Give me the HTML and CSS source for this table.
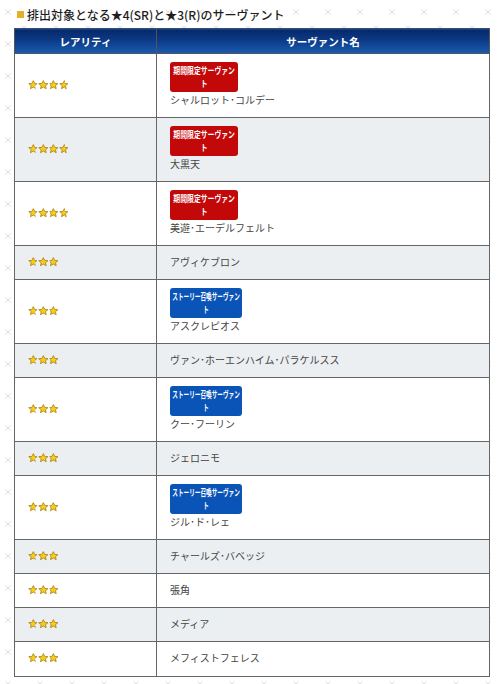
FILE: index.html
```html
<!DOCTYPE html>
<html lang="ja">
<head>
<meta charset="utf-8">
<link rel="stylesheet" href="styles.css">
</head>
<body>
<div class="page">
  <h2 class="title"><span class="mark"></span>排出対象となる★4(SR)と★3(R)のサーヴァント</h2>
  <table class="list">
    <thead>
      <tr><th class="col-r">レアリティ</th><th>サーヴァント名</th></tr>
    </thead>
    <tbody>
      <tr><td><span class="stars s4"></span></td><td><span class="badge red"><span class="btxt">期間限定サーヴァント</span></span><span class="name">シャルロット･コルデー</span></td></tr>
      <tr class="alt"><td><span class="stars s4"></span></td><td><span class="badge red"><span class="btxt">期間限定サーヴァント</span></span><span class="name">大黒天</span></td></tr>
      <tr><td><span class="stars s4"></span></td><td><span class="badge red"><span class="btxt">期間限定サーヴァント</span></span><span class="name">美遊･エーデルフェルト</span></td></tr>
      <tr class="alt"><td><span class="stars s3"></span></td><td><span class="name">アヴィケブロン</span></td></tr>
      <tr><td><span class="stars s3"></span></td><td><span class="badge blue"><span class="btxt">ストーリー召喚サーヴァント</span></span><span class="name">アスクレピオス</span></td></tr>
      <tr class="alt"><td><span class="stars s3"></span></td><td><span class="name">ヴァン･ホーエンハイム･パラケルスス</span></td></tr>
      <tr><td><span class="stars s3"></span></td><td><span class="badge blue"><span class="btxt">ストーリー召喚サーヴァント</span></span><span class="name">クー･フーリン</span></td></tr>
      <tr class="alt"><td><span class="stars s3"></span></td><td><span class="name">ジェロニモ</span></td></tr>
      <tr><td><span class="stars s3"></span></td><td><span class="badge blue"><span class="btxt">ストーリー召喚サーヴァント</span></span><span class="name">ジル･ド･レェ</span></td></tr>
      <tr class="alt"><td><span class="stars s3"></span></td><td><span class="name">チャールズ･バベッジ</span></td></tr>
      <tr><td><span class="stars s3"></span></td><td><span class="name">張角</span></td></tr>
      <tr class="alt"><td><span class="stars s3"></span></td><td><span class="name">メディア</span></td></tr>
      <tr><td><span class="stars s3"></span></td><td><span class="name">メフィストフェレス</span></td></tr>
    </tbody>
  </table>
</div>
</body>
</html>
```
FILE: styles.css
```css
html, body {
  margin: 0;
  padding: 0;
}
body {
  width: 500px;
  height: 684px;
  overflow: hidden;
  font-family: "Noto Sans CJK JP", "Noto Sans", sans-serif;
  color: #333;
  background-color: #fff;
  background-image: url("data:image/svg+xml;utf8,<svg xmlns='http://www.w3.org/2000/svg' width='32' height='32'><g stroke='%23dddddd' stroke-width='1' fill='none'><path d='M5.5 9.5l5 5M10.5 9.5l-5 5M21.5 25.5l5 5M26.5 25.5l-5 5'/></g></svg>");
  background-size: 32px 32px;
  background-position: 0 0;
}
.page {
  padding: 5px 0 0 14px;
}
.title {
  margin: 0 0 5px 0;
  display: flex;
  align-items: center;
  height: 18px;
  font-size: 12px;
  font-weight: 500;
  color: #1e1e1e;
}
.mark {
  display: inline-block;
  width: 7px;
  height: 7px;
  background: #e2b02e;
  margin: 0 3px 0 3px;
}
.list {
  border-collapse: collapse;
  width: 476px;
  border: 1px solid #666;
  table-layout: fixed;
}
.list th {
  height: 24px;
  padding: 0;
  background: linear-gradient(#06286a 0%, #0c3a86 45%, #1a5bb2 100%);
  color: #fff;
  font-size: 10.5px;
  font-weight: 700;
  border: 1px solid #555;
  border-top: 1px solid #3a4a66;
  text-align: center;
}
.list th.col-r {
  width: 141px;
}
.list td {
  border: 1px solid #666;
  padding: 8px 13px 9px 13px;
  vertical-align: middle;
  font-size: 10px;
  line-height: 16px;
  background: #fff;
}
.list tr.alt td {
  background: #ebeff2;
}
.list tbody tr:last-child td {
  padding-bottom: 10px;
}
.badge {
  display: block;
  height: 30px;
  overflow: hidden;
  color: #fff;
  font-weight: 700;
  font-size: 9px;
  line-height: 13px;
  border-radius: 3px;
  padding: 2px 3px;
  box-sizing: border-box;
}
.btxt {
  display: block;
  text-align: center;
  transform-origin: 0 0;
}
.badge.red {
  width: 68px;
  background: #c20808;
}
.badge.red .btxt {
  width: 82px;
  transform: scaleX(0.76);
}
.badge.blue {
  width: 72px;
  padding: 2px 2px;
  background: #0a54b8;
}
.badge.blue .btxt {
  width: 109px;
  transform: scaleX(0.625);
}
.name {
  display: block;
  color: #444;
  font-size: 10px;
  line-height: 16px;
}
.stars {
  display: block;
  height: 10px;
  background-image: url("data:image/svg+xml;utf8,<svg xmlns='http://www.w3.org/2000/svg' width='10.3' height='10' viewBox='0 0 10.3 10'><path d='M5 0.6l1.3 2.8 3 0.3-2.3 2 0.7 3-2.7-1.6-2.7 1.6 0.7-3-2.3-2 3-0.3z' fill='%23f6cf12' stroke='%23a07010' stroke-width='0.7' stroke-linejoin='round'/></svg>");
  background-repeat: repeat-x;
  background-size: 10.3px 10px;
}
.stars.s4 { width: 41.2px; }
.stars.s3 { width: 30.9px; }
```
